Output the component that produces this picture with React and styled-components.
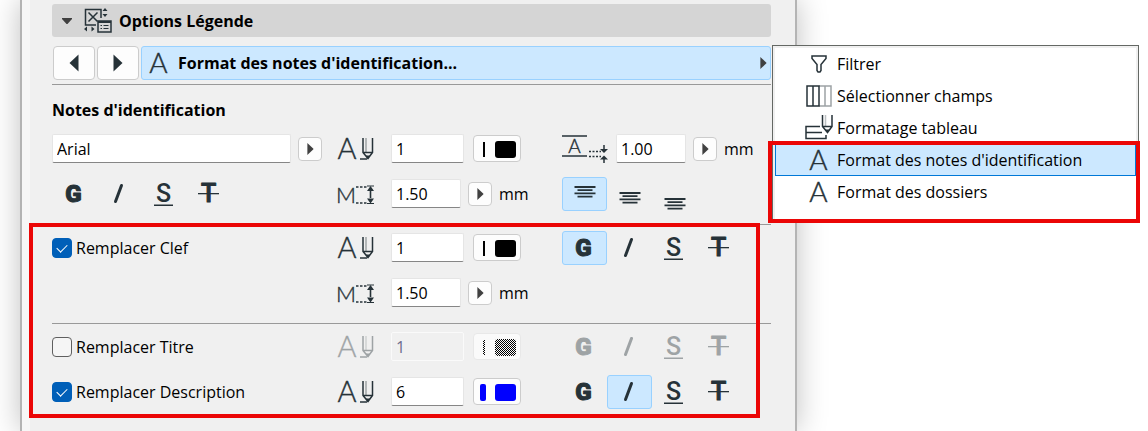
import React from 'react';
import styled, { createGlobalStyle } from 'styled-components';

const INK = '#263238';

const TriangleIcon = ({ size = 10, left }) => (
    <svg width={size} height={size * 2} viewBox="0 0 10 20" fill="currentColor">
        <path d={left ? 'M9.500 1.500v17L.5 10z' : 'M.5 1.500v17L9.500 10z'}/>
    </svg>
);

const ChevronIcon = () => (
    <svg width="12" height="8" viewBox="0 0 12 8">
        <path fill="#404040" d="M1 1h10v1L6.500 7h-1L1 2z"/>
    </svg>
);

const LegendIcon = () => (
    <svg width="28" height="26" viewBox="0 0 28 26" fill="none" stroke={INK} strokeWidth="1.500">
        <path d="M12 17H1.500V1.500H17V10"/>
        <path d="M4.500 4.500l9 9M13.500 4.500l-9 9"/>
        <path fill={INK} stroke="none" d="M21 0l2.500 3h-5zM21 9l2.500-3h-5zM0 21l3-2.500v5zM10.500 21l-3-2.500v5z"/>
        <rect x="14" y="13" width="13" height="11"/>
        <path strokeWidth="2" d="M14 14h13"/>
        <path strokeWidth="1.200" d="M16.500 17.500h1.500M19.500 17.500h5M16.500 20.500h1.500M19.500 20.500h5"/>
    </svg>
);

const LetterAIcon = () => (
    <svg width="20" height="24" viewBox="0 0 20 24" fill={INK}>
        <IconText x="9.500" y="22" textAnchor="middle">A</IconText>
    </svg>
);

const PenTextIcon = () => (
    <svg width="38" height="26" viewBox="0 0 38 26" fill="none" stroke={INK} strokeWidth="1.500">
        <IconText x="10" y="23" textAnchor="middle" $size={29}>A</IconText>
        <path d="M26 2v14.500l5 6 4.500-6V2M26 16.500h9.500"/>
        <path opacity="0.4" d="M29 2v14"/>
        <path fill={INK} stroke="none" d="M28.500 19.500h4.500l-2.200 3.500z"/>
        <path d="M23 23h7"/>
    </svg>
);

const TextSizeIcon = () => (
    <svg width="38" height="26" viewBox="0 0 38 26" fill="none" stroke={INK} strokeWidth="1.500">
        <IconText x="-1" y="22" $size={22}>M</IconText>
        <path strokeDasharray="2.500 1.500" d="M19 6h12M19 22h12"/>
        <path d="M30 5h7M30 22.500h7" strokeWidth="1"/>
        <path fill={INK} stroke="none" d="M33.500 5l3.500 5h-7zM33.500 22.500l3.500-5h-7zM32.700 8h1.600v10h-1.600z"/>
    </svg>
);

const LineSpacingIcon = () => (
    <svg width="46" height="30" viewBox="0 0 46 30" fill="none" stroke={INK} strokeWidth="1.500">
        <path d="M0 2h25M0 22h25"/>
        <IconText x="12.500" y="19" textAnchor="middle" $size={19}>A</IconText>
        <path strokeDasharray="2 1.500" d="M27 17.500h12M27 22.500h12"/>
        <path d="M42 11v5M42 24v5"/>
        <path fill={INK} stroke="none" d="M42 19l-4-4h8zM42 21.500l-4 4h8z"/>
    </svg>
);

const AlignIcon = ({ shift }) => (
    <svg width="22" height="24" viewBox="0 0 22 24" stroke={INK} strokeWidth="1.800">
        <path d={`M.5 ${shift}h21M3.500 ${shift + 3.2}h15M.5 ${shift + 6.4}h21M3.500 ${shift + 9.6}h15`}/>
    </svg>
);

const FilterIcon = () => (
    <svg width="16" height="18" viewBox="0 0 16 18" fill="none" stroke={INK} strokeWidth="1.500">
        <path d="M1 1h14v2.500L10 9.500v6l-1 1.500H7l-1-1.500v-6L1 3.500z"/>
    </svg>
);

const ColumnsIcon = () => (
    <svg width="26" height="22" viewBox="0 0 26 22" fill="none" stroke={INK} strokeWidth="1.500">
        <path stroke="#9da2a5" d="M13 1h12v20H13M19 1v20"/>
        <path d="M1 1h12v20H1zM7 1v20"/>
    </svg>
);

const TableFormatIcon = () => (
    <svg width="28" height="26" viewBox="0 0 28 26" fill="none" stroke={INK} strokeWidth="1.500">
        <path d="M15 11.500H1v12h20v-3.500M1 17.500h16"/>
        <path d="M17.500 0v11.500l5 6 4.500-6V0M17.500 11.500H27"/>
        <path opacity="0.3" d="M20.500 0v11"/>
        <path fill={INK} stroke="none" d="M20 14.500h4.500l-2.200 3z"/>
    </svg>
);

const BoldIcon = () => (
    <svg width="24" height="26" viewBox="2 0 24 26" fill={INK}>
        <StyleText x="12.500" y="21" textAnchor="middle" stroke={INK} $size={24} $weight={900}>G</StyleText>
    </svg>
);

const ItalicIcon = () => (
    <svg width="24" height="26" viewBox="2 0 24 26" stroke={INK} strokeWidth="3" strokeLinecap="round">
        <path d="M15.500 4.500L9.500 20.500"/>
    </svg>
);

const UnderlineIcon = () => (
    <svg width="24" height="26" viewBox="2 0 24 26" fill={INK}>
        <StyleText x="12.500" y="21" textAnchor="middle">S</StyleText>
        <path d="M3 23.500h19V25H3z"/>
    </svg>
);

const StrikeIcon = () => (
    <svg width="24" height="26" viewBox="2 0 24 26" fill={INK}>
        <StyleText x="12.500" y="21" textAnchor="middle" stroke={INK}>T</StyleText>
        <path d="M2 12h21v1.300H2z"/>
    </svg>
);

const PenSwatch = ({ color, thick, disabled }) => (
    <svg width="45" height="24" viewBox="0 0 45 24" fill={disabled ? 'url(#dither)' : color}>
        <defs>
            <pattern id="dither" width="2" height="2" patternUnits="userSpaceOnUse">
                <path fill="#000" shapeRendering="crispEdges" d="M0 0h1v1H0zM1 1h1v1H1z"/>
            </pattern>
        </defs>
        {thick
            ? <rect x="5" y="4" width="6" height="17" rx="2"/>
            : <rect x="8" y="5" width="2" height="15"/>}
        <rect x="20" y="4" width="21" height="17" rx="3"/>
    </svg>
);

const styleIcons = {
    Gras: BoldIcon,
    Italique: ItalicIcon,
    Souligné: UnderlineIcon,
    Barré: StrikeIcon,
};

const TextStyles = ({ active, disabled }) => (
    <ButtonGroup>
        {Object.entries(styleIcons).map(([name, Icon]) => (
            <ToggleButton key={name} aria-label={name} $active={active === name} disabled={disabled}>
                <Icon/>
            </ToggleButton>
        ))}
    </ButtonGroup>
);

const PenField = ({ value, color = '#000', thick, disabled }) => (
    <Field>
        <IconCell $faded={disabled}><PenTextIcon/></IconCell>
        <TextInput aria-label="Stylo" defaultValue={value} $width={73} disabled={disabled}/>
        <SwatchButton aria-label="Couleur du stylo" disabled={disabled}>
            <PenSwatch color={color} thick={thick} disabled={disabled}/>
        </SwatchButton>
    </Field>
);

const SizeField = () => (
    <Field>
        <IconCell><TextSizeIcon/></IconCell>
        <TextInput aria-label="Hauteur du texte" defaultValue="1.50" $width={70}/>
        <MoreButton aria-label="Choisir la hauteur"><TriangleIcon size={7}/></MoreButton>
        <span>mm</span>
    </Field>
);

const CheckField = ({ label, checked }) => (
    <CheckLabel>
        <Checkbox type="checkbox" defaultChecked={checked}/>
        {label}
    </CheckLabel>
);

const menuItems = [
    { label: 'Filtrer', Icon: FilterIcon },
    { label: 'Sélectionner champs', Icon: ColumnsIcon },
    { label: 'Formatage tableau', Icon: TableFormatIcon },
    { label: "Format des notes d'identification", Icon: LetterAIcon, active: true },
    { label: 'Format des dossiers', Icon: LetterAIcon },
];

const App = () => {
    return (
        <>
            <GlobalStyle/>
            <Page>
                <Panel>
                    <Header aria-expanded="true">
                        <ChevronIcon/>
                        <LegendIcon/>
                        Options Légende
                    </Header>
                    <Nav>
                        <NavButton aria-label="Page précédente"><TriangleIcon left/></NavButton>
                        <NavButton aria-label="Page suivante"><TriangleIcon/></NavButton>
                        <PageSelector>
                            <PageButton aria-haspopup="menu">
                                <LetterAIcon/>
                                <PageTitle>Format des notes d'identification...</PageTitle>
                                <TriangleIcon size={7}/>
                            </PageButton>
                            <Menu role="menu">
                                {menuItems.map(({ label, Icon, active }) => (
                                    <MenuItem key={label} role="menuitem" $active={active}>
                                        <MenuIcon><Icon/></MenuIcon>
                                        {label}
                                    </MenuItem>
                                ))}
                                <MenuHighlight/>
                            </Menu>
                        </PageSelector>
                    </Nav>

                    <Section>
                        <Title>Notes d'identification</Title>
                        <Row>
                            <Field>
                                <TextInput aria-label="Police" defaultValue="Arial" $width={239}/>
                                <MoreButton aria-label="Choisir la police"><TriangleIcon size={7}/></MoreButton>
                            </Field>
                            <PenField value="1"/>
                            <Field>
                                <IconCell><LineSpacingIcon/></IconCell>
                                <TextInput aria-label="Interligne" defaultValue="1.00" $width={70}/>
                                <MoreButton aria-label="Choisir l'interligne"><TriangleIcon size={7}/></MoreButton>
                                <span>mm</span>
                            </Field>
                        </Row>
                        <Row>
                            <TextStyles/>
                            <SizeField/>
                            <ButtonGroup>
                                <ToggleButton aria-label="Aligner en haut" $active><AlignIcon shift={5}/></ToggleButton>
                                <ToggleButton aria-label="Aligner au milieu"><AlignIcon shift={11}/></ToggleButton>
                                <ToggleButton aria-label="Aligner en bas"><AlignIcon shift={17}/></ToggleButton>
                            </ButtonGroup>
                        </Row>
                    </Section>

                    <Overrides>
                        <Section>
                            <Row>
                                <CheckField label="Remplacer Clef" checked/>
                                <PenField value="1"/>
                                <TextStyles active="Gras"/>
                            </Row>
                            <Row>
                                <span/>
                                <SizeField/>
                            </Row>
                        </Section>
                        <Section>
                            <Row>
                                <CheckField label="Remplacer Titre"/>
                                <PenField value="1" disabled/>
                                <TextStyles disabled/>
                            </Row>
                            <Row>
                                <CheckField label="Remplacer Description" checked/>
                                <PenField value="6" color="#0000ff" thick/>
                                <TextStyles active="Italique"/>
                            </Row>
                        </Section>
                    </Overrides>
                </Panel>
            </Page>
        </>
    );
};

const GlobalStyle = createGlobalStyle`
    * {
        box-sizing: border-box;
    }

    body {
        margin: 0;
        background: #fff;
        color: #000;
        font-family: "Open Sans", "Noto Sans", sans-serif;
        font-size: 16px;
        line-height: 24px;
    }

    button,
    input {
        font: inherit;
        color: inherit;
        margin: 0;
    }

    button {
        display: flex;
        align-items: center;
        justify-content: center;
        padding: 0;
    }

    svg {
        display: block;
        flex: none;
        overflow: visible;
    }
`;

const Page = styled.main`
    min-height: 100vh;
    display: flex;
    padding: 0 351px 0 20px;
`;

const Panel = styled.section`
    flex: 1;
    min-width: 0;
    padding: 4px 24px 8px 30px;
    background: #f0f0f0;
    border: solid #b4b4b4;
    border-width: 0 2px;
    box-shadow: inset 8px 0 #f7f7f7, 0 0 28px rgba(0, 0, 0, 0.25);
`;

const Header = styled.button`
    width: 100%;
    height: 33px;
    padding: 0 9px;
    justify-content: flex-start;
    gap: 7px;
    border: none;
    border-radius: 3px;
    background: #d5d5d5;
    font-weight: 700;

    svg:first-child {
        margin-right: 4px;
    }
`;

const Nav = styled.nav`
    display: flex;
    gap: 2px;
    padding: 9px 0 4px 1px;
`;

const NavButton = styled.button`
    width: 42px;
    height: 34px;
    border: 1px solid #ccc;
    border-radius: 4px;
    background: #fdfdfd;
    color: ${INK};
`;

const PageSelector = styled.div`
    position: relative;
    flex: 1;
`;

const PageButton = styled.button`
    width: 100%;
    height: 34px;
    padding: 0 3px 0 7px;
    gap: 9px;
    border: 1px solid #99d1ff;
    border-radius: 3px;
    background: #cce8ff;
    font-weight: 700;
    text-align: left;

    svg:last-child {
        color: #404040;
    }
`;

const PageTitle = styled.span`
    flex: 1;
`;

const Menu = styled.div`
    position: absolute;
    z-index: 1;
    top: -1px;
    left: calc(100% + 1px);
    width: 367px;
    height: 177px;
    padding: 2px;
    border: 1px solid #646864;
    background: #fff;
    box-shadow: inset 0 0 0 2px #f0f0f0;
`;

const MenuItem = styled.button`
    width: 100%;
    height: 32px;
    padding: 0 29px;
    gap: 4px;
    justify-content: flex-start;
    border: 1px solid ${({ $active }) => ($active ? '#0078d7' : 'transparent')};
    background: ${({ $active }) => ($active ? '#cce8ff' : 'transparent')};
`;

const MenuIcon = styled.span`
    display: flex;
    justify-content: center;
    width: 28px;
`;

const MenuHighlight = styled.div`
    position: absolute;
    inset: 95px -2px -2px -5px;
    border: 4px solid #eb0606;
    pointer-events: none;
`;

const Section = styled.section`
    padding-bottom: 8px;
    border-top: 1px solid #999;
`;

const Overrides = styled.div`
    position: relative;

    &::after {
        content: "";
        position: absolute;
        inset: -1px 11px 4px -23px;
        border: 4px solid #eb0606;
        pointer-events: none;
    }
`;

const Title = styled.h2`
    margin: 0;
    padding: 13px 0 4px;
    font-size: 16px;
    font-weight: 700;
`;

const Row = styled.div`
    display: grid;
    grid-template-columns: 285px 225px 1fr;
    align-items: center;
    height: 45px;
`;

const Field = styled.div`
    display: flex;
    align-items: center;
    gap: 7px;
`;

const IconCell = styled.span`
    display: flex;
    width: 47px;
    opacity: ${({ $faded }) => ($faded ? 0.4 : 1)};
`;

const TextInput = styled.input`
    width: ${({ $width }) => $width}px;
    height: 29px;
    padding: 0 4px;
    border: 1px solid #e5e5e5;
    border-bottom-color: #868686;
    border-radius: 2px;
    background: #fff;

    &:disabled {
        border-color: #fafafa;
        background: #f0f0f0;
        color: #6d6d8d;
    }
`;

const MoreButton = styled.button`
    width: 24px;
    height: 24px;
    border: 1px solid #ccc;
    border-radius: 4px;
    background: #fdfdfd;
    color: #404040;
`;

const SwatchButton = styled.button`
    width: 48px;
    height: 27px;
    margin-left: 2px;
    border: 1px solid #ccc;
    border-radius: 4px;
    background: #fdfdfd;

    &:disabled {
        border-color: #e8e8e8;
        background: #fafafa;
    }
`;

const ButtonGroup = styled.div`
    display: flex;
`;

const ToggleButton = styled.button`
    width: 45px;
    height: 34px;
    border: 1px solid ${({ $active }) => ($active ? '#99d1ff' : 'transparent')};
    border-radius: 3px;
    background: ${({ $active }) => ($active ? '#cce8ff' : 'transparent')};

    &:disabled svg {
        opacity: 0.4;
    }
`;

const CheckLabel = styled.label`
    display: flex;
    align-items: center;
    gap: 4px;
`;

const Checkbox = styled.input`
    appearance: none;
    display: flex;
    justify-content: center;
    width: 20px;
    height: 20px;
    border: 1px solid #5f5f5f;
    border-radius: 4px;
    background: #f5f5f5;

    &:checked {
        border-color: #005fb8;
        background: #005fb8;
    }

    &:checked::after {
        content: "";
        width: 5px;
        height: 9px;
        margin-top: 3px;
        border: solid #fff;
        border-width: 0 1px 1px 0;
        transform: rotate(45deg);
    }
`;

const IconText = styled.text`
    font-family: Lato, sans-serif;
    font-size: ${({ $size = 28 }) => $size}px;
    font-weight: 300;
    fill: ${INK};
    stroke: ${INK};
    stroke-width: 0.4px;
`;

const StyleText = styled.text`
    font-family: Roboto, sans-serif;
    font-size: ${({ $size = 25 }) => $size}px;
    font-weight: ${({ $weight = 500 }) => $weight};
    stroke-width: 1px;
    stroke-linejoin: round;
`;

export default App;
